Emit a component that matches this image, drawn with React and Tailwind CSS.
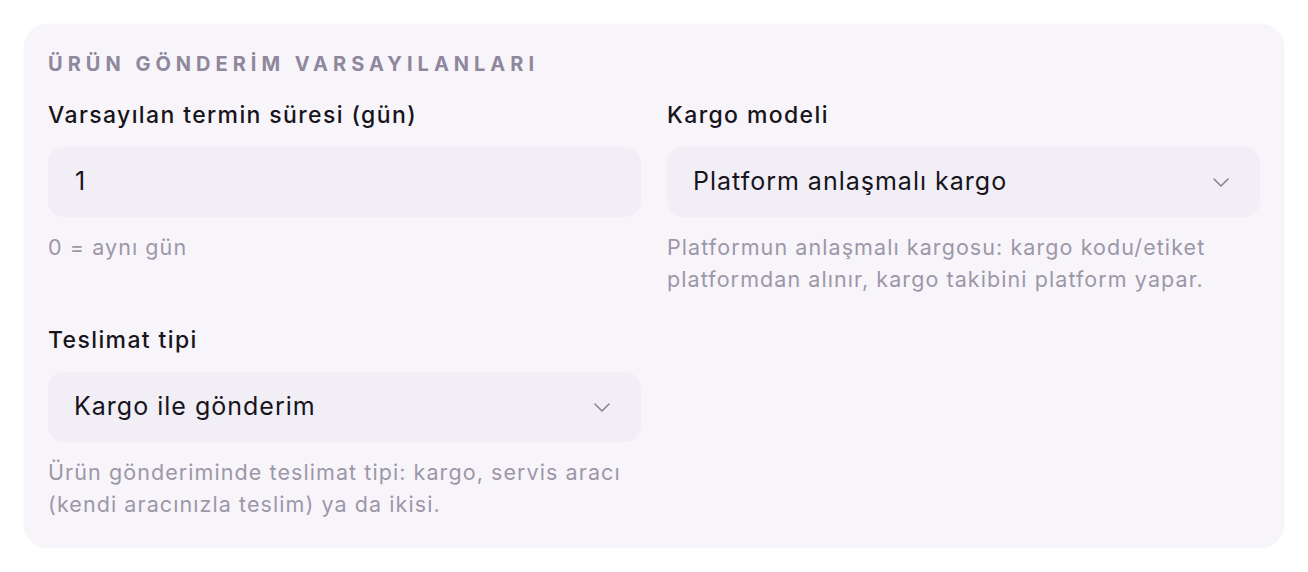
import React from 'react';

const font = { fontFamily: 'Inter, "Noto Sans", sans-serif' };

function Chevron() {
  return (
    <svg width="24" height="24" viewBox="0 0 24 24" fill="none" stroke="#8a8494" strokeWidth="1.6" strokeLinecap="round" strokeLinejoin="round">
      <path d="M5 9l7 7 7-7" />
    </svg>
  );
}

function Field({ label, children, help }) {
  return (
    <div className="flex flex-col">
      <label className="text-[23px] leading-[28px] font-medium text-[#17141c] tracking-[0.06em]">{label}</label>
      <div className="mt-[18px]">{children}</div>
      {help && (
        <p className="mt-[14px] text-[21.5px] leading-[32px] text-[#9d97a8] tracking-[0.05em]">{help}</p>
      )}
    </div>
  );
}

function Select({ value }) {
  return (
    <div className="h-[70px] rounded-[16px] bg-[#f1eef6] pl-[26px] pr-[27px] flex items-center justify-between">
      <span className="text-[25px] text-[#17141c] tracking-[0.04em]">{value}</span>
      <Chevron />
    </div>
  );
}

export default function App() {
  return (
    <div className="w-[1308px] h-[572px] bg-white p-[24px]" style={font}>
      <div className="h-[524px] rounded-[24px] bg-[#f7f5fa] px-[24px] pt-[28px] pb-[26px] shadow-[0_0_0_1px_rgba(120,100,150,0.03)]">
        <h2 className="text-[20px] leading-[24px] font-bold uppercase tracking-[0.25em] text-[#8f879c]">
          Ürün Gönderİm Varsayılanları
        </h2>
        <div className="mt-[25px] grid grid-cols-2 gap-x-[26px] gap-y-[31px]">
          <Field label="Varsayılan termin süresi (gün)" help="0 = aynı gün">
            <div className="h-[70px] rounded-[16px] bg-[#f1eef6] px-[27px] flex items-center">
              <span className="text-[25px] text-[#17141c]">1</span>
            </div>
          </Field>
          <Field
            label="Kargo modeli"
            help="Platformun anlaşmalı kargosu: kargo kodu/etiket platformdan alınır, kargo takibini platform yapar."
          >
            <Select value="Platform anlaşmalı kargo" />
          </Field>
          <Field
            label="Teslimat tipi"
            help="Ürün gönderiminde teslimat tipi: kargo, servis aracı (kendi aracınızla teslim) ya da ikisi."
          >
            <Select value="Kargo ile gönderim" />
          </Field>
        </div>
      </div>
    </div>
  );
}
